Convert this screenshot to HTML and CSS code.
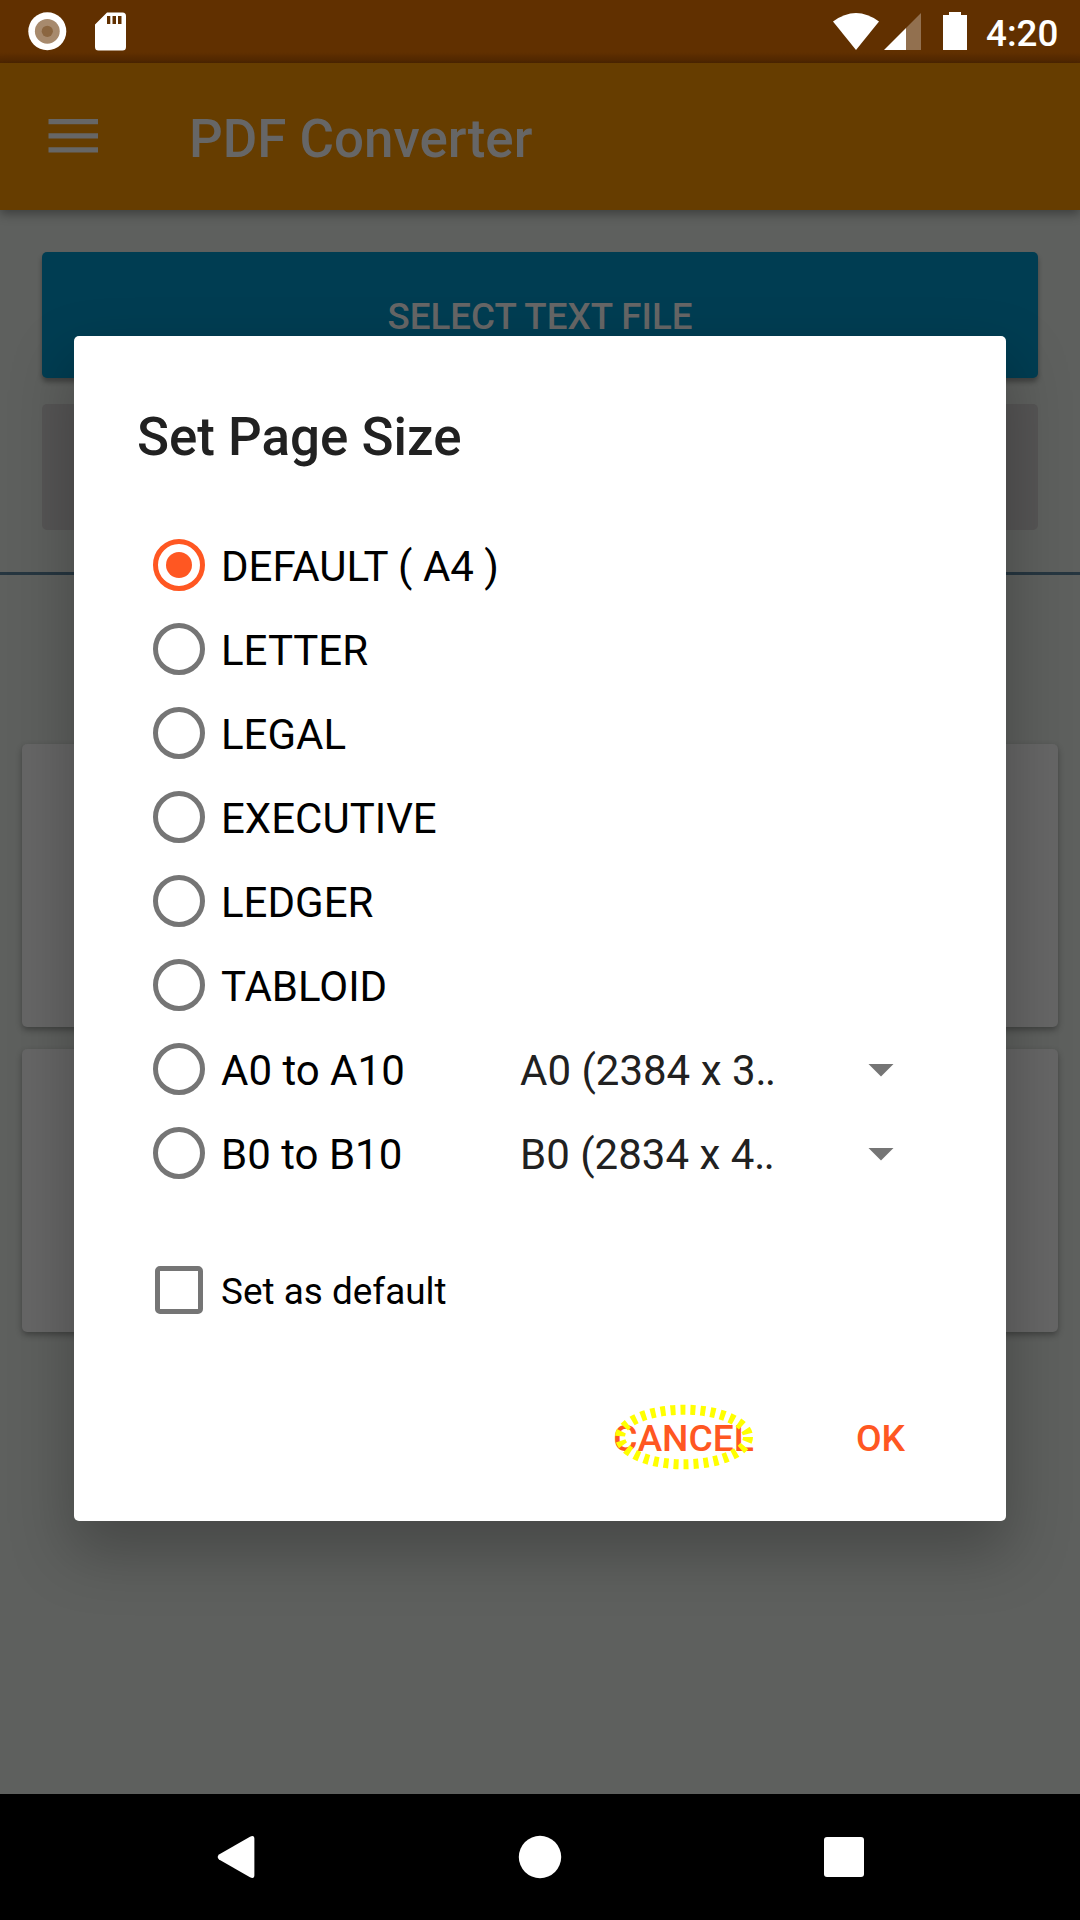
FILE: index.html
```html
<!DOCTYPE html>
<html lang="en">
<head>
<meta charset="utf-8">
<title>PDF Converter</title>
<link rel="stylesheet" href="styles.css">
</head>
<body>
<div class="screen">
  <div class="status">
    <svg class="status-left" width="140" height="63" viewBox="0 0 140 63">
      <circle cx="47.3" cy="31.3" r="19" fill="#fff"/>
      <circle cx="47.3" cy="31.3" r="12.4" fill="#a78a6d"/>
      <circle cx="47.3" cy="31.3" r="5.6" fill="#8b6640"/>
      <path fill="#fff" fill-rule="evenodd" d="M107 12.5h15.500q3.500 0 3.500 3.500v31q0 3.500-3.500 3.500h-24q-3.500 0-3.500-3.500V24.500zM107 16v8h3.300v-8zM112.500 16v8h3.500v-8zM118 16v8h3.500v-8z"/>
    </svg>
    <svg width="160" height="63" viewBox="820 0 160 63">
      <path fill="#fff" d="M833 21.500Q856 4.500 879 21.500L856 50z"/>
      <path fill="#fff" opacity=".31" d="M906 28l15-15v37h-15z"/>
      <path fill="#fff" d="M884 50l22-22v22z"/>
      <path fill="#fff" d="M949 12h12v3h6v35h-24V15h6z"/>
    </svg>
    <span class="clock">4:20</span>
  </div>
  <header class="appbar">
    <svg class="menu" width="50" height="36" viewBox="0 0 50 36"><path fill="#666" d="M.5 1H50v5.200H.5zM.5 15.200H50v5.200H.5zM.5 29.300H50v5.200H.5z"/></svg>
    <h1 class="app-title">PDF Converter</h1>
  </header>
  <main class="content">
    <div class="buttons">
      <div class="btn btn-select">SELECT TEXT FILE</div>
      <div class="btn btn-disabled"></div>
    </div>
    <div class="divider"></div>
    <div class="cards">
      <div class="card"></div>
      <div class="card"></div>
    </div>
  </main>
  <nav class="navbar">
    <svg width="1080" height="126" viewBox="0 0 1080 126" fill="#fff">
      <path d="M219 60.500L250 42.700Q254.400 40.500 254.400 45V81Q254.400 85.500 250 83.300L219 65.500Q216.400 63 219 60.500z"/>
      <circle cx="540" cy="63" r="21.200"/>
      <rect x="824" y="43" width="40" height="40" rx="3"/>
    </svg>
  </nav>
  <section class="dialog">
    <h2 class="dialog-title">Set Page Size</h2>
    <div class="options">
      <div class="row"><span class="radio checked"></span><span class="label">DEFAULT ( A4 )</span></div>
      <div class="row"><span class="radio"></span><span class="label">LETTER</span></div>
      <div class="row"><span class="radio"></span><span class="label">LEGAL</span></div>
      <div class="row"><span class="radio"></span><span class="label">EXECUTIVE</span></div>
      <div class="row"><span class="radio"></span><span class="label">LEDGER</span></div>
      <div class="row"><span class="radio"></span><span class="label">TABLOID</span></div>
      <div class="row"><span class="radio"></span><span class="label range">A0 to A10</span><span class="label value">A0 (2384 x 3<span class="dots">..</span></span><span class="caret"></span></div>
      <div class="row"><span class="radio"></span><span class="label range">B0 to B10</span><span class="label value">B0 (2834 x 4<span class="dots">..</span></span><span class="caret"></span></div>
    </div>
    <div class="row default-row"><span class="checkbox"></span><span class="label small">Set as default</span></div>
    <div class="actions">
      <span class="action cancel">CANCEL
        <svg class="ring" width="150" height="76" viewBox="0 0 150 76"><ellipse cx="75" cy="38" rx="64" ry="27.300" fill="none" stroke="#ff0" stroke-width="10" stroke-dasharray="5 5"/></svg>
      </span>
      <span class="action ok">OK</span>
    </div>
  </section>
</div>
</body>
</html>
```
FILE: styles.css
```css
* { box-sizing: border-box; }
body { margin: 0; font-family: Roboto, sans-serif; }
h1, h2 { margin: 0; font-weight: 500; font-size: 52.9px; line-height: 62px; white-space: nowrap; }

.screen {
  position: relative;
  display: flex;
  flex-direction: column;
  width: 1080px;
  height: 1920px;
  overflow: hidden;
  background: #5e605e;
}

.status {
  display: flex;
  height: 63px;
  background: linear-gradient(#613000 52px, #4f2600 63px);
}
.status-left { margin-right: auto; }
.clock {
  width: 100px;
  padding: 2px 0 0 6px;
  color: #fff;
  font-size: 36.75px;
  font-weight: 500;
  line-height: 63px;
}

.appbar {
  display: flex;
  align-items: center;
  height: 147px;
  padding-left: 48px;
  background: #663d00;
  box-shadow: 0 4px 10px rgba(0, 0, 0, .35);
}
.menu { margin-top: -2px; }
.app-title { margin-left: 91px; padding-top: 5px; color: #666; }

.content { flex: 1; }
.buttons { display: flex; flex-direction: column; gap: 26px; padding: 42px 42px 0; }
.btn { height: 126px; border-radius: 5px; }
.btn-select {
  padding-top: 3px;
  background: #003d52;
  color: #666;
  font-size: 36.75px;
  font-weight: 500;
  line-height: 123px;
  text-align: center;
  box-shadow: 0 4px 5px rgba(0, 0, 0, .32);
}
.btn-disabled { background: #565555; }
.divider { height: 3px; margin-top: 42px; background: #263640; }
.cards { display: flex; flex-direction: column; gap: 22px; padding: 169px 22px 0; }
.card { height: 283px; border-radius: 5px; background: #666; box-shadow: 0 3px 6px rgba(0, 0, 0, .32); }

.navbar { height: 126px; background: #000; }
.navbar svg { display: block; }

.dialog {
  position: absolute;
  left: 74px;
  top: 336px;
  width: 932px;
  height: 1185px;
  padding-top: 70px;
  border-radius: 5px;
  background: #fff;
  box-shadow: 0 28px 60px 4px rgba(0, 0, 0, .25);
}
.dialog-title { padding-left: 63px; color: #212121; }
.options { margin-top: 55px; }
.row { display: flex; align-items: center; height: 84px; padding-left: 79px; }
.radio {
  display: flex;
  align-items: center;
  justify-content: center;
  width: 52px;
  height: 52px;
  border: 5px solid #757575;
  border-radius: 50%;
}
.radio.checked { border-color: #ff5722; }
.radio.checked::before { content: ""; width: 26px; height: 26px; border-radius: 50%; background: #ff5722; }
.label { padding: 3px 0 0 16px; color: #000; font-size: 42px; line-height: 50px; white-space: nowrap; }
.range { width: 315px; }
.value { width: 348px; padding-left: 0; color: #212121; }
.dots { letter-spacing: -1.5px; }
.caret { width: 26px; height: 13px; margin-top: 2px; background: #757575; clip-path: polygon(0 0, 100% 0, 50% 100%); }
.default-row { margin-top: 53px; padding-left: 81px; }
.checkbox { width: 48px; height: 48px; border: 5px solid #757575; border-radius: 5px; }
.small { padding-left: 18px; font-size: 36.9px; }

.actions {
  display: flex;
  justify-content: flex-end;
  gap: 102px;
  margin-top: 81px;
  padding-right: 101px;
}
.action { position: relative; color: #ff5722; font-size: 37.2px; font-weight: 500; line-height: 50px; }
.ring { position: absolute; left: -4px; top: -14px; }
```
